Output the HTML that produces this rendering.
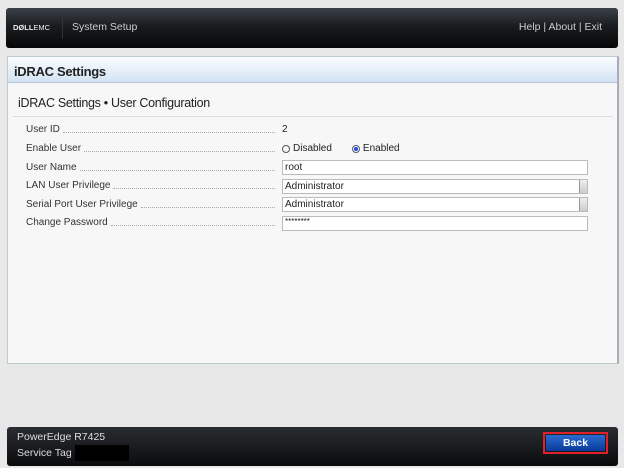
<!DOCTYPE html><html><head><style>
body{margin:0;width:624px;height:468px;background:#e8e8e8;font-family:"Liberation Sans",sans-serif;position:relative;overflow:hidden;font-size:10px;color:#222}
.hdr{position:absolute;left:6px;top:8px;width:612px;height:40px;border-radius:3px;background:linear-gradient(#3b4148,#1a1d20 45%,#050607);color:#ccc}
.panel{position:absolute;left:7px;top:56px;width:609px;height:306px;background:#f7f7f7;border:1px solid #bcc;border-right:2px solid #aab;}
.tb{height:25px;background:linear-gradient(#fbfdff,#d2e3f3);border-bottom:1px solid #b7c8d8;font-weight:bold;font-size:13px;padding-left:6px;line-height:29px;letter-spacing:-0.3px}
.sub{position:absolute;left:10px;top:39px;font-size:12.5px;letter-spacing:-0.3px}
.hl{position:absolute;left:5px;top:59px;width:600px;border-top:1px solid #ddd}
.row{position:absolute;left:18px;width:252px;font-size:10px;color:#333;display:flex;align-items:center}
.row .d{flex:1;border-bottom:1px dotted #aaa;margin:0 3px;height:6px}
.inp{position:absolute;left:274px;width:302px;height:13px;border:1px solid #bbb;background:#fff;font-size:10px;line-height:13px;padding-left:2px;box-sizing:content-box}
.arr{position:absolute;right:0;top:0;width:7px;height:13px;background:linear-gradient(#eee,#ccc);border-left:1px solid #999}
.ftr{position:absolute;left:7px;top:427px;width:611px;height:39px;border-radius:3px;background:linear-gradient(#2a2d31,#0a0b0c);color:#ddd;font-size:10.5px}
</style></head><body>
<div class="hdr"><span style="position:absolute;left:7px;top:15px;font-size:7.5px;font-weight:bold;color:#eee">D&#216;LL<span style="font-weight:normal">EMC</span></span>
<span style="position:absolute;left:56px;top:9px;height:22px;border-left:1px solid #333"></span>
<span style="position:absolute;left:66px;top:13px;font-size:10.5px">System Setup</span>
<span style="position:absolute;right:16px;top:13px;font-size:10.5px">Help | About | Exit</span></div>
<div class="panel"><div class="tb">iDRAC Settings</div>
<div class="sub">iDRAC Settings • User Configuration</div><div class="hl"></div>
<div class="row" style="top:67px">User ID<span class="d"></span></div><div style="position:absolute;left:274px;top:67px;font-size:10px">2</div>
<div class="row" style="top:86px">Enable User<span class="d"></span></div>
<div style="position:absolute;left:274px;top:86px;font-size:10px;display:flex;align-items:center"><span style="width:6px;height:6px;border:1px solid #555;border-radius:50%;margin-right:3px"></span>Disabled<span style="width:6px;height:6px;border:1px solid #557;border-radius:50%;margin:0 3px 0 20px;background:radial-gradient(#2a55d8 45%,#fff 55%)"></span>Enabled</div>
<div class="row" style="top:105px">User Name<span class="d"></span></div><div class="inp" style="top:103px">root</div>
<div class="row" style="top:123px">LAN User Privilege<span class="d"></span></div><div class="inp" style="top:122px">Administrator<div class="arr"></div></div>
<div class="row" style="top:142px">Serial Port User Privilege<span class="d"></span></div><div class="inp" style="top:140px">Administrator<div class="arr"></div></div>
<div class="row" style="top:160px">Change Password<span class="d"></span></div><div class="inp" style="top:159px;font-size:8px;line-height:9px">********</div>
</div>
<div class="ftr"><div style="position:absolute;left:10px;top:4px">PowerEdge R7425</div><div style="position:absolute;left:10px;top:20px">Service Tag</div>
<div style="position:absolute;left:68px;top:18px;width:54px;height:16px;background:#000"></div>
<div style="position:absolute;left:536px;top:5px;width:65px;height:22px;border:2px solid #e0202a;box-sizing:border-box;padding:1px"><div style="background:linear-gradient(#2a6ad0,#0a3a9a);height:100%;color:#fff;font-weight:bold;text-align:center;line-height:16px">Back</div></div></div>
</body></html>
